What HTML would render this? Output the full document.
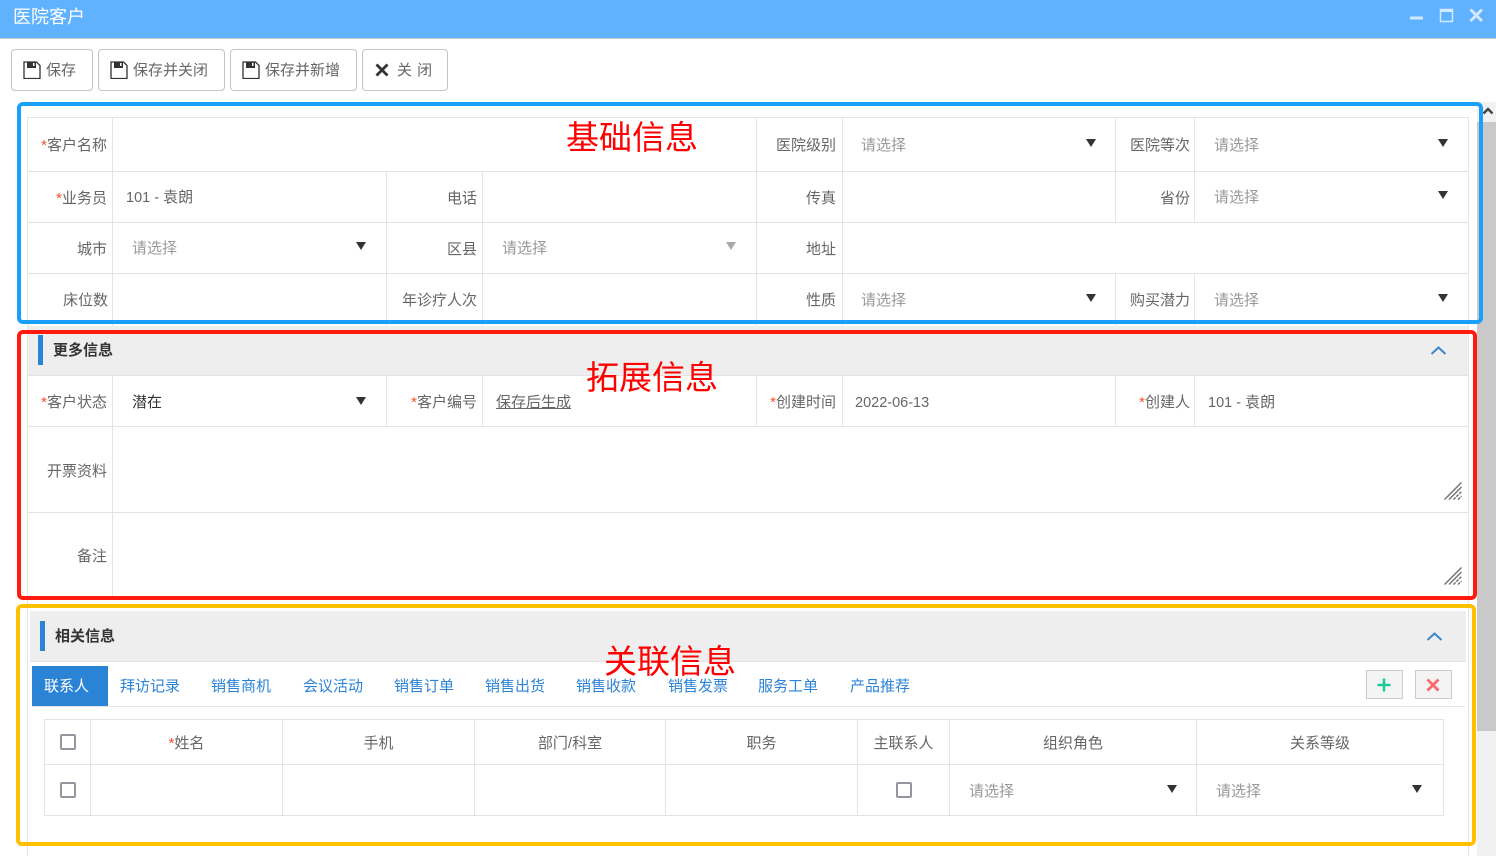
<!DOCTYPE html>
<html lang="zh"><head><meta charset="utf-8"><title>医院客户</title>
<style>
html,body{margin:0;padding:0;background:#fff;width:1496px;height:856px;overflow:hidden}
body{position:relative;font:15px/22px "Liberation Sans","Noto Sans CJK SC",sans-serif;color:#666}
div,span,svg{position:absolute}
b.n{font-weight:normal;font-size:14.500px}
.t{white-space:nowrap}
.h{background:#e4e4e4;height:1px}
.v{background:#e4e4e4;width:1px}
.l{white-space:nowrap;text-align:right;width:110px}
.l i{font-style:normal;color:#f5502a}
.p{white-space:nowrap;color:#999}
.a{width:0;height:0;border-left:5.500px solid transparent;border-right:5.500px solid transparent;border-top:8px solid #333}
.btn{box-sizing:border-box;height:42px;top:49px;border:1px solid #c4c4c4;border-radius:4px;background:#fff}
.box{box-sizing:border-box;border-style:solid;border-width:4px;border-radius:6px}
.ann{color:#f00;font-size:33px;line-height:40px;white-space:nowrap}
.tab{color:#2b83d6;white-space:nowrap}
.sec{background:#eee}
.cb{box-sizing:border-box;width:16px;height:16px;border:2px solid #96969f;border-radius:2px;background:#fff}
.c{white-space:nowrap;text-align:center}
</style></head><body>

<div style="left:0;top:0;width:1496px;height:38px;background:#60b2fe;border-bottom:1px solid #c9c9c9"></div>
<div class="t" style="left:13px;top:5px;font-size:18px;line-height:24px;color:#fff">医院客户</div>
<svg style="left:1405px;top:5px" width="85" height="20" viewBox="0 0 85 20" fill="none">
<rect x="5" y="11.500" width="13" height="3" fill="#d3e9ff"/>
<rect x="35.500" y="4.500" width="12" height="12" stroke="#d3e9ff" stroke-width="1.500"/><rect x="35" y="4" width="13" height="3" fill="#d3e9ff"/>
<path d="M65.500 4.500L77 16M77 4.500L65.500 16" stroke="#d3e9ff" stroke-width="3"/>
</svg>

<div class="btn" style="left:11px;width:82px"></div>
<div class="btn" style="left:98px;width:127px"></div>
<div class="btn" style="left:230px;width:127px"></div>
<div class="btn" style="left:362px;width:86px"></div>
<svg style="left:23px;top:61px" width="18" height="18" viewBox="0 0 18 18" fill="none"><path d="M1 1H13.500L17 4.500V17.500H1Z" stroke="#333" stroke-width="1.300"/><rect x="4" y="1" width="9" height="6" fill="#333"/><rect x="10" y="2" width="1.500" height="3" fill="#fff"/></svg>
<svg style="left:110px;top:61px" width="18" height="18" viewBox="0 0 18 18" fill="none"><path d="M1 1H13.500L17 4.500V17.500H1Z" stroke="#333" stroke-width="1.300"/><rect x="4" y="1" width="9" height="6" fill="#333"/><rect x="10" y="2" width="1.500" height="3" fill="#fff"/></svg>
<svg style="left:242px;top:61px" width="18" height="18" viewBox="0 0 18 18" fill="none"><path d="M1 1H13.500L17 4.500V17.500H1Z" stroke="#333" stroke-width="1.300"/><rect x="4" y="1" width="9" height="6" fill="#333"/><rect x="10" y="2" width="1.500" height="3" fill="#fff"/></svg>
<svg style="left:375px;top:63px" width="14" height="14" viewBox="0 0 14 14" fill="none"><path d="M1.500 1.500L12.500 12.500M12.500 1.500L1.500 12.500" stroke="#333" stroke-width="2.800"/></svg>
<div class="t" style="left:46px;top:60px">保存</div>
<div class="t" style="left:133px;top:60px">保存并关闭</div>
<div class="t" style="left:265px;top:60px">保存并新增</div>
<div class="t" style="left:397px;top:60px;word-spacing:1px">关 闭</div>

<!-- scrollbar -->
<div style="left:1477px;top:102px;width:19px;height:754px;background:#f1f1f1"></div>
<div style="left:1477px;top:122px;width:19px;height:609px;background:#c9c9c9"></div>
<svg style="left:1482px;top:106px" width="12" height="10" viewBox="0 0 12 10" fill="none"><path d="M1.500 7.500L6 3L10.500 7.500" stroke="#444" stroke-width="2.400"/></svg>

<!-- outer lines -->
<div class="v" style="left:27px;top:117px;height:739px"></div>
<div class="v" style="left:1468px;top:117px;height:739px"></div>

<!-- base table -->
<div class="h" style="left:27px;top:117px;width:1442px"></div>
<div class="h" style="left:27px;top:171px;width:1442px"></div>
<div class="h" style="left:27px;top:222px;width:1442px"></div>
<div class="h" style="left:27px;top:273px;width:1442px"></div>
<div class="v" style="left:112px;top:117px;height:210px"></div>
<div class="v" style="left:386px;top:171px;height:156px"></div>
<div class="v" style="left:482px;top:171px;height:156px"></div>
<div class="v" style="left:756px;top:117px;height:210px"></div>
<div class="v" style="left:842px;top:117px;height:210px"></div>
<div class="v" style="left:1115px;top:117px;height:54px"></div>
<div class="v" style="left:1115px;top:171px;height:51px"></div>
<div class="v" style="left:1115px;top:273px;height:54px"></div>
<div class="v" style="left:1194px;top:117px;height:105px"></div>
<div class="v" style="left:1194px;top:273px;height:54px"></div>

<div class="l" style="left:-3px;top:135px"><i>*</i>客户名称</div>
<div class="l" style="left:726px;top:135px">医院级别</div>
<div class="p" style="left:861px;top:135px">请选择</div><div class="a" style="left:1086px;top:139px"></div>
<div class="l" style="left:1080px;top:135px">医院等次</div>
<div class="p" style="left:1214px;top:135px">请选择</div><div class="a" style="left:1438px;top:139px"></div>

<div class="l" style="left:-3px;top:188px"><i>*</i>业务员</div>
<div class="t" style="left:126px;top:187px"><b class="n">101 - </b>袁朗</div>
<div class="l" style="left:367px;top:188px">电话</div>
<div class="l" style="left:726px;top:188px">传真</div>
<div class="l" style="left:1080px;top:188px">省份</div>
<div class="p" style="left:1214px;top:187px">请选择</div><div class="a" style="left:1438px;top:191px"></div>

<div class="l" style="left:-3px;top:239px">城市</div>
<div class="p" style="left:132px;top:238px">请选择</div><div class="a" style="left:356px;top:242px"></div>
<div class="l" style="left:367px;top:239px">区县</div>
<div class="p" style="left:502px;top:238px">请选择</div><div class="a" style="left:726px;top:242px;border-top-color:#aaa"></div>
<div class="l" style="left:726px;top:239px">地址</div>

<div class="l" style="left:-2px;top:290px">床位数</div>
<div class="l" style="left:367px;top:290px">年诊疗人次</div>
<div class="l" style="left:726px;top:290px">性质</div>
<div class="p" style="left:861px;top:290px">请选择</div><div class="a" style="left:1086px;top:294px"></div>
<div class="l" style="left:1080px;top:290px">购买潜力</div>
<div class="p" style="left:1214px;top:290px">请选择</div><div class="a" style="left:1438px;top:294px"></div>

<!-- more info -->
<div class="sec" style="left:28px;top:326px;width:1440px;height:49px"></div>
<div class="h" style="left:27px;top:375px;width:1442px"></div>
<div style="left:38px;top:335px;width:5px;height:30px;background:#2b83d6"></div>
<div class="t" style="left:53px;top:340px;font-weight:bold;color:#333">更多信息</div>
<svg style="left:1430px;top:344px" width="17" height="12" viewBox="0 0 17 12" fill="none"><path d="M1.500 10L8.500 3.500L15.500 10" stroke="#3a87d0" stroke-width="2"/></svg>

<div class="h" style="left:27px;top:426px;width:1442px"></div>
<div class="h" style="left:27px;top:512px;width:1442px"></div>
<div class="v" style="left:112px;top:375px;height:222px"></div>
<div class="v" style="left:386px;top:375px;height:51px"></div>
<div class="v" style="left:482px;top:375px;height:51px"></div>
<div class="v" style="left:756px;top:375px;height:51px"></div>
<div class="v" style="left:842px;top:375px;height:51px"></div>
<div class="v" style="left:1115px;top:375px;height:51px"></div>
<div class="v" style="left:1194px;top:375px;height:51px"></div>

<div class="l" style="left:-3px;top:392px"><i>*</i>客户状态</div>
<div class="t" style="left:132px;top:392px;color:#333">潜在</div><div class="a" style="left:356px;top:397px"></div>
<div class="l" style="left:367px;top:392px"><i>*</i>客户编号</div>
<div class="t" style="left:496px;top:392px;text-decoration:underline">保存后生成</div>
<div class="l" style="left:726px;top:392px"><i>*</i>创建时间</div>
<div class="t" style="left:855px;top:392px;font-size:14.500px">2022-06-13</div>
<div class="l" style="left:1080px;top:392px"><i>*</i>创建人</div>
<div class="t" style="left:1208px;top:392px"><b class="n">101 - </b>袁朗</div>
<div class="l" style="left:-3px;top:461px">开票资料</div>
<div class="l" style="left:-3px;top:546px">备注</div>
<svg style="left:1444px;top:482px" width="18" height="18" viewBox="0 0 18 18" fill="none" stroke="#777" stroke-width="1.500"><path d="M0.500 17.500L17.500 0.500M5 17.500L17.500 5"/><path d="M9.500 17.500L17.500 9.500M14 17.500L17.500 14" stroke-dasharray="3 1"/></svg>
<svg style="left:1444px;top:567px" width="18" height="18" viewBox="0 0 18 18" fill="none" stroke="#777" stroke-width="1.500"><path d="M0.500 17.500L17.500 0.500M5 17.500L17.500 5"/><path d="M9.500 17.500L17.500 9.500M14 17.500L17.500 14" stroke-dasharray="3 1"/></svg>

<!-- related info -->
<div class="h" style="left:27px;top:597px;width:1442px"></div>
<div class="sec" style="left:30px;top:611px;width:1436px;height:50px;border-bottom:1px solid #e4e4e4"></div>
<div style="left:40px;top:621px;width:5px;height:30px;background:#2b83d6"></div>
<div class="t" style="left:55px;top:626px;font-weight:bold;color:#333">相关信息</div>
<svg style="left:1426px;top:630px" width="17" height="12" viewBox="0 0 17 12" fill="none"><path d="M1.500 10L8.500 3.500L15.500 10" stroke="#3a87d0" stroke-width="2"/></svg>

<div style="left:32px;top:666px;width:76px;height:40px;background:#2b83d6"></div>
<div class="t" style="left:44px;top:676px;color:#fff">联系人</div>
<div class="h" style="left:32px;top:706px;width:1433px"></div>
<div class="tab" style="left:120px;top:676px">拜访记录</div>
<div class="tab" style="left:211px;top:676px">销售商机</div>
<div class="tab" style="left:303px;top:676px">会议活动</div>
<div class="tab" style="left:394px;top:676px">销售订单</div>
<div class="tab" style="left:485px;top:676px">销售出货</div>
<div class="tab" style="left:576px;top:676px">销售收款</div>
<div class="tab" style="left:668px;top:676px">销售发票</div>
<div class="tab" style="left:758px;top:676px">服务工单</div>
<div class="tab" style="left:850px;top:676px">产品推荐</div>

<div style="box-sizing:border-box;left:1366px;top:670px;width:37px;height:29px;background:#f4f4f4;border:1px solid #ccc"></div>
<div style="box-sizing:border-box;left:1415px;top:670px;width:37px;height:29px;background:#f4f4f4;border:1px solid #ccc"></div>
<svg style="left:1377px;top:678px" width="14" height="14" viewBox="0 0 14 14" fill="none"><path d="M7 0.500V13.500M0.500 7H13.500" stroke="#20c997" stroke-width="2.600"/></svg>
<svg style="left:1426px;top:678px" width="14" height="14" viewBox="0 0 14 14" fill="none"><path d="M1.500 1.500L12.500 12.500M12.500 1.500L1.500 12.500" stroke="#fb6a6a" stroke-width="2.800"/></svg>

<div class="h" style="left:44px;top:719px;width:1400px"></div>
<div class="h" style="left:44px;top:764px;width:1400px"></div>
<div class="h" style="left:44px;top:815px;width:1400px"></div>
<div class="v" style="left:44px;top:719px;height:97px"></div>
<div class="v" style="left:90px;top:719px;height:97px"></div>
<div class="v" style="left:282px;top:719px;height:97px"></div>
<div class="v" style="left:474px;top:719px;height:97px"></div>
<div class="v" style="left:665px;top:719px;height:97px"></div>
<div class="v" style="left:857px;top:719px;height:97px"></div>
<div class="v" style="left:949px;top:719px;height:97px"></div>
<div class="v" style="left:1196px;top:719px;height:97px"></div>
<div class="v" style="left:1443px;top:719px;height:97px"></div>

<div class="cb" style="left:60px;top:734px"></div>
<div class="cb" style="left:60px;top:782px"></div>
<div class="cb" style="left:896px;top:782px"></div>
<div class="c" style="left:91px;top:733px;width:191px"><i style="font-style:normal;color:#f5502a">*</i>姓名</div>
<div class="c" style="left:283px;top:733px;width:191px">手机</div>
<div class="c" style="left:475px;top:733px;width:190px">部门/科室</div>
<div class="c" style="left:666px;top:733px;width:191px">职务</div>
<div class="c" style="left:858px;top:733px;width:91px">主联系人</div>
<div class="c" style="left:950px;top:733px;width:246px">组织角色</div>
<div class="c" style="left:1197px;top:733px;width:246px">关系等级</div>
<div class="p" style="left:969px;top:781px">请选择</div><div class="a" style="left:1167px;top:785px"></div>
<div class="p" style="left:1216px;top:781px">请选择</div><div class="a" style="left:1412px;top:785px"></div>

<!-- annotation boxes -->
<div class="box" style="left:17px;top:102px;width:1466px;height:222px;border-color:#18a0fb"></div>
<div class="box" style="left:17px;top:330px;width:1460px;height:270px;border-color:#ff1a10"></div>
<div class="box" style="left:16px;top:604px;width:1460px;height:242px;border-color:#ffc000"></div>
<div class="ann" style="left:566px;top:118px">基础信息</div>
<div class="ann" style="left:586px;top:358px">拓展信息</div>
<div class="ann" style="left:604px;top:642px">关联信息</div>
</body></html>
